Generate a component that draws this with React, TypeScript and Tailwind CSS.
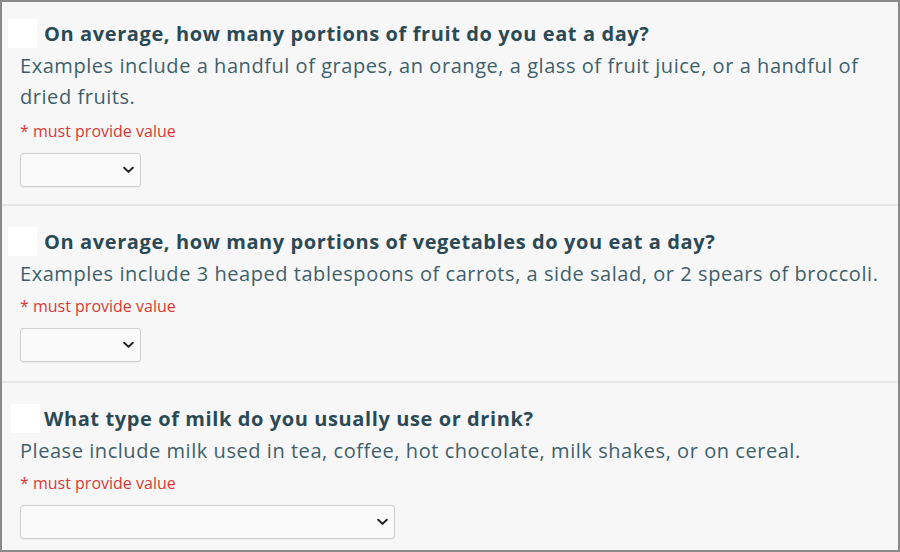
import React from "react";

type Question = {
  title: string;
  help: string;
  selectWidth: string;
  pad: string;
  boxOffset: string;
  titleGap: string;
  redGap: string;
};

const questions: Question[] = [
  {
    title: "On average, how many portions of fruit do you eat a day?",
    help: "Examples include a handful of grapes, an orange, a glass of fruit juice, or a handful of dried fruits.",
    selectWidth: "w-[121px]",
    pad: "pt-[16px] pb-[17px]",
    boxOffset: "ml-[6px]",
    titleGap: "ml-[7px]",
    redGap: "mt-[8px]",
  },
  {
    title: "On average, how many portions of vegetables do you eat a day?",
    help: "Examples include 3 heaped tablespoons of carrots, a side salad, or 2 spears of broccoli.",
    selectWidth: "w-[121px]",
    pad: "pt-[20px] pb-[19px]",
    boxOffset: "ml-[6px]",
    titleGap: "ml-[7px]",
    redGap: "mt-[6px]",
  },
  {
    title: "What type of milk do you usually use or drink?",
    help: "Please include milk used in tea, coffee, hot chocolate, milk shakes, or on cereal.",
    selectWidth: "w-[375px]",
    pad: "pt-[20px] pb-[10px]",
    boxOffset: "ml-[9px]",
    titleGap: "ml-[4px]",
    redGap: "mt-[6px]",
  },
];

function Chevron() {
  return (
    <svg width="11" height="7" viewBox="0 0 11 7" className="absolute right-[7px] top-1/2 -translate-y-1/2 pointer-events-none">
      <path d="M1.2 1.2 L5.5 5.4 L9.8 1.2" fill="none" stroke="#222" strokeWidth="2" strokeLinecap="round" strokeLinejoin="round" />
    </svg>
  );
}

function QuestionBlock({ q, last }: { q: Question; last: boolean }) {
  return (
    <div className={`${q.pad} ${last ? "" : "border-b-2 border-[#e6e6e6]"}`}>
      <div className="flex items-center h-[31px]">
        <div className={`${q.boxOffset} w-[29px] h-[29px] bg-white shrink-0`} />
        <h3 className={`${q.titleGap} text-[20px] leading-[31px] tracking-[0.6px] font-bold text-[#2b4a55] whitespace-nowrap`}>{q.title}</h3>
      </div>
      <div className="pl-[18px] pr-[14px]">
        <p className="mt-[1px] text-[20px] leading-[31px] tracking-[0.55px] text-[#3f5f6a]">{q.help}</p>
        <p className={`${q.redGap} text-[16px] leading-[22px] text-[#d93a35]`}>* must provide value</p>
        <div className={`relative mt-[11px] ${q.selectWidth} h-[34px]`}>
          <select className="appearance-none w-full h-full border border-[#cfcfcf] rounded-[3px] bg-[#fafafa] text-[15px] px-2 shadow-[0_1px_1px_rgba(0,0,0,0.04)]">
            <option value=""></option>
          </select>
          <Chevron />
        </div>
      </div>
    </div>
  );
}

export default function App() {
  return (
    <div className="w-[900px] h-[552px] overflow-hidden bg-[#f7f7f7] border-2 border-[#8a8a8a]" style={{ fontFamily: '"Open Sans", "Noto Sans", sans-serif' }}>
      {questions.map((q, i) => (
        <QuestionBlock key={i} q={q} last={i === questions.length - 1} />
      ))}
    </div>
  );
}
